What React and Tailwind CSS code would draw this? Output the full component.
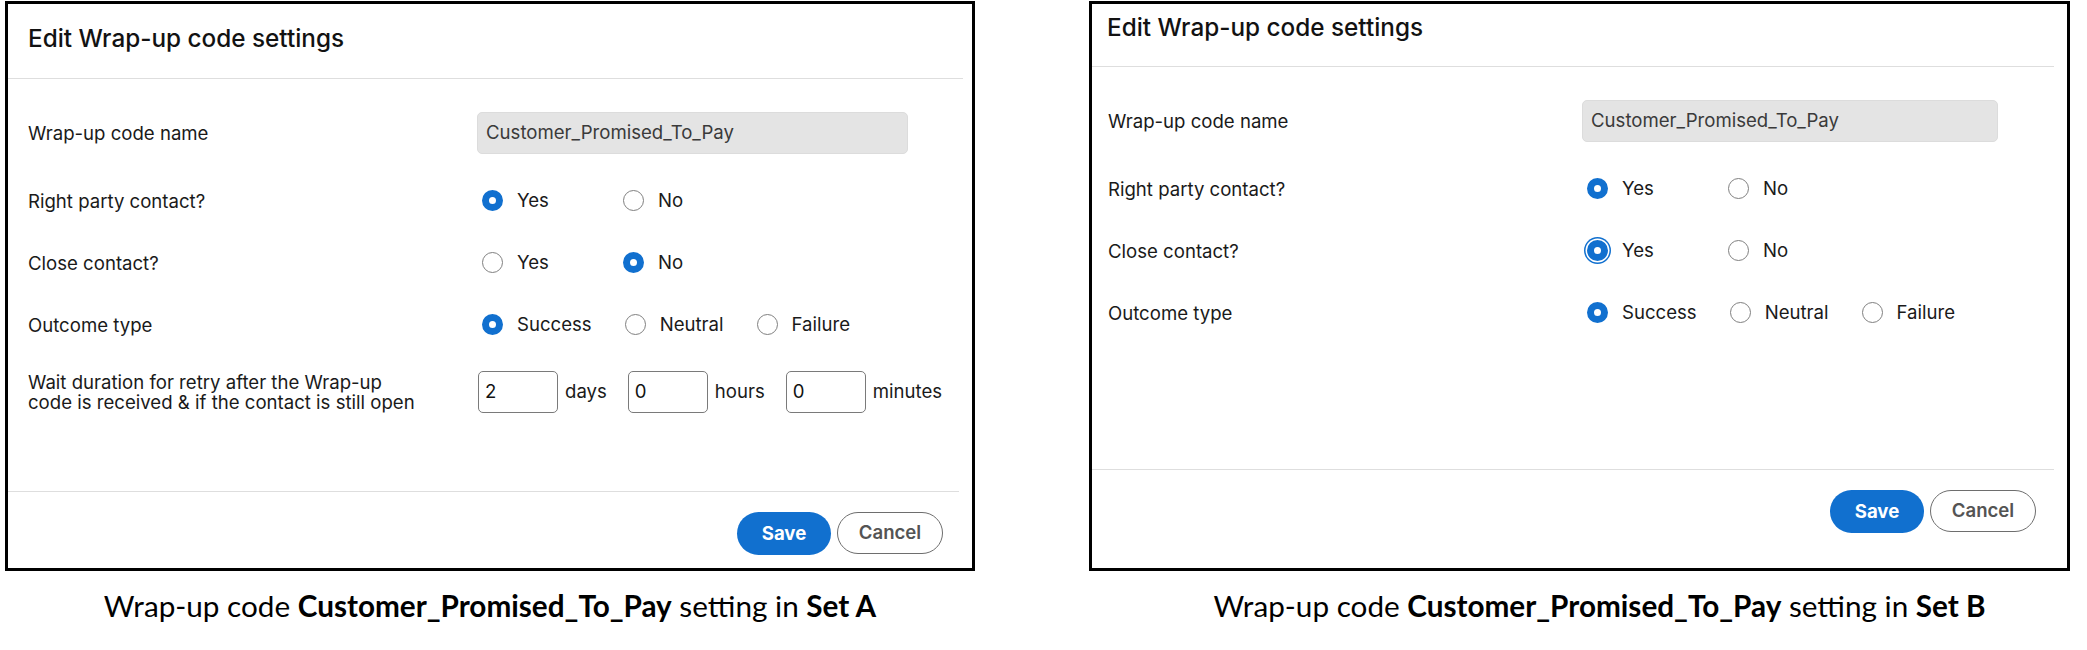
import React from "react";

const UI_FONT = "font-['Inter','Liberation_Sans',sans-serif]";

function Radio({ label, checked, focused, wide }) {
  return (
    <div className={`flex items-center gap-[14px] ${wide ? "min-w-[108px]" : ""}`}>
      <span
        className={`block w-[21px] h-[21px] rounded-full shrink-0 bg-white ${
          checked ? "border-[7px] border-[#1170cf]" : "border border-[#808080]"
        } ${focused ? "shadow-[0_0_0_1.5px_#ffffff,0_0_0_3px_#1170cf]" : ""}`}
      />
      <span className="text-[18.6px] text-[#1a1a1a]">{label}</span>
    </div>
  );
}

function RadioGroup({ options, value, focused }) {
  const wide = options.length === 2;
  return (
    <div className="flex items-center gap-[33px] pl-[5px]">
      {options.map((o) => (
        <Radio key={o} label={o} wide={wide} checked={o === value} focused={focused && o === value} />
      ))}
    </div>
  );
}

function NumberBox({ value, unit }) {
  return (
    <div className="flex items-center gap-[7px]">
      <div className="w-[80px] h-[42px] border border-[#7a7a7a] rounded-[5px] bg-white flex items-center pl-[6px] text-[18.6px] text-[#121212]">
        {value}
      </div>
      <span className="text-[18.6px] text-[#1a1a1a]">{unit}</span>
    </div>
  );
}

function Row({ label, labelW, className = "", children }) {
  return (
    <div className={`flex items-center h-[42px] ${className}`}>
      <div className={`${labelW} shrink-0 text-[18.6px] leading-[20px] text-[#1a1a1a]`}>{label}</div>
      {children}
    </div>
  );
}

function Panel({ set }) {
  const a = set === "A";
  const labelW = a ? "w-[449px]" : "w-[474px]";
  return (
    <div
      className={`flex flex-col bg-white border-[3px] border-black h-[570px] ${UI_FONT} ${
        a ? "w-[970px]" : "w-[981px]"
      }`}
    >
      {/* Header */}
      <div className={a ? "h-[74px] pt-[19px] pl-[20px]" : "h-[62px] pt-[8px] pl-[15px]"}>
        <h2 className="text-[24.3px] leading-[30px] font-medium text-[#121212]">Edit Wrap-up code settings</h2>
      </div>
      <div className={`h-px bg-[#dedede] ${a ? "mr-[9px]" : "mr-[13px]"}`} />

      {/* Body */}
      <div className={`flex-1 pt-[33px] ${a ? "pl-[20px]" : "pl-[16px]"}`}>
        <Row label="Wrap-up code name" labelW={labelW}>
          <div
            className={`h-[42px] bg-[#e4e4e4] border border-[#dcdcdc] rounded-[5px] flex items-center pl-[8px] text-[18.6px] text-[#3a3a3a] ${
              a ? "w-[431px]" : "w-[416px]"
            }`}
          >
            Customer_Promised_To_Pay
          </div>
        </Row>
        <Row label="Right party contact?" labelW={labelW} className="mt-[26px]">
          <RadioGroup options={["Yes", "No"]} value="Yes" />
        </Row>
        <Row label="Close contact?" labelW={labelW} className="mt-[20px]">
          <RadioGroup options={["Yes", "No"]} value={a ? "No" : "Yes"} focused={!a} />
        </Row>
        <Row label="Outcome type" labelW={labelW} className="mt-[20px]">
          <RadioGroup options={["Success", "Neutral", "Failure"]} value="Success" />
        </Row>
        {a && (
          <Row
            label={
              <>
                Wait duration for retry after the Wrap-up
                <br />
                code is received &amp; if the contact is still open
              </>
            }
            labelW={labelW}
            className="mt-[25px]"
          >
            <div className="flex items-center gap-[21px] pl-[1px]">
              <NumberBox value="2" unit="days" />
              <NumberBox value="0" unit="hours" />
              <NumberBox value="0" unit="minutes" />
            </div>
          </Row>
        )}
      </div>

      {/* Footer */}
      <div className="h-px bg-[#dedede] mr-[13px]" />
      <div className={`flex justify-end gap-[6px] pt-[20px] ${a ? "h-[76px] pr-[29px]" : "h-[98px] pr-[31px]"}`}>
        <button className="w-[94px] h-[43px] rounded-full bg-[#1170cf] text-white text-[18.6px] font-bold">Save</button>
        <button className="w-[106px] h-[42px] rounded-full bg-white border border-[#6e6e6e] text-[#545454] text-[18.6px] font-semibold">
          Cancel
        </button>
      </div>
    </div>
  );
}

function Caption({ set, className = "" }) {
  return (
    <p
      className={`mt-[18px] text-center text-[29.7px] leading-[34px] text-black font-['Lato','Open_Sans',sans-serif] ${className}`}
    >
      Wrap-up code <b className="font-bold">Customer_Promised_To_Pay</b> setting in <b className="font-bold">Set {set}</b>
    </p>
  );
}

export default function App() {
  return (
    <div className="w-[2087px] h-[650px] bg-white flex pl-[5px] pt-[1px]">
      <div className="w-[970px]">
        <Panel set="A" />
        <Caption set="A" />
      </div>
      <div className="w-[981px] ml-[114px]">
        <Panel set="B" />
        <Caption set="B" className="pl-[40px]" />
      </div>
    </div>
  );
}
